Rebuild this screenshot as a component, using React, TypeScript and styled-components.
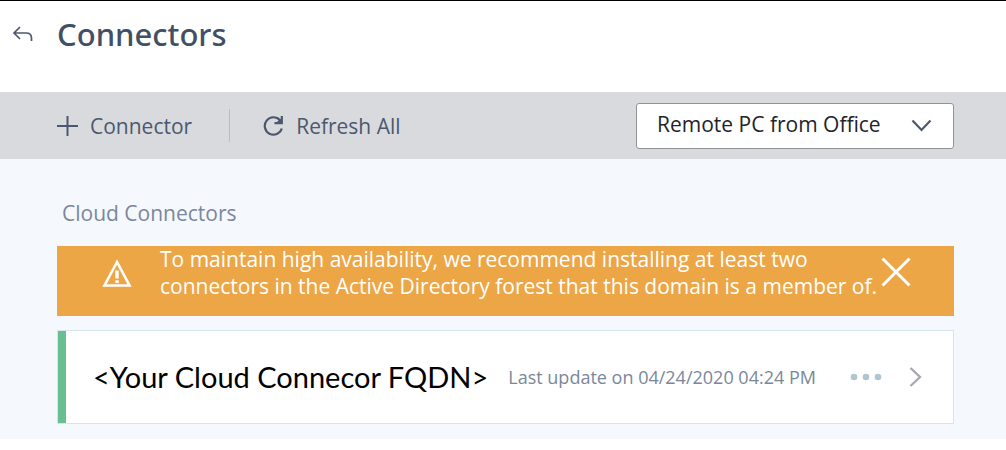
import React from 'react';
import styled, { createGlobalStyle } from 'styled-components';

const GlobalStyle = createGlobalStyle`
  *, *::before, *::after { box-sizing: border-box; }
  body {
    margin: 0;
    background: #fff;
    color: #4b586e;
    font-family: 'Open Sans', 'Noto Sans', sans-serif;
  }
  button, select { font: inherit; color: inherit; }
`;

const Page = styled.div`
  border-top: 1px solid #000;
`;

const IconButton = styled.button`
  display: flex;
  flex: none;
  align-items: center;
  justify-content: center;
  padding: 0;
  border: 0;
  background: none;
  cursor: pointer;
`;

const Header = styled.header`
  display: flex;
  align-items: center;
  gap: 24px;
  height: 91px;
  padding: 0 12px 26px;
`;

const Title = styled.h1`
  margin: 0;
  font-family: 'Noto Sans', sans-serif;
  font-size: 31px;
  line-height: 40px;
  font-weight: 500;
  color: #434f65;
`;

const Toolbar = styled.div`
  display: flex;
  align-items: center;
  height: 67px;
  padding: 0 52px 0 57px;
  background: #d9dade;
`;

const ToolButton = styled(IconButton)`
  gap: 12px;
  font-size: 21px;
  line-height: 28px;
`;

const Divider = styled.span`
  width: 1px;
  height: 33px;
  margin: 0 33px 0 37px;
  background: #bcbdc1;
`;

const SelectWrap = styled.div`
  display: grid;
  align-items: center;
  width: 318px;
  margin-left: auto;
  > * { grid-area: 1 / 1; }
  > svg { justify-self: end; margin-right: 22px; pointer-events: none; }
`;

const Select = styled.select`
  appearance: none;
  width: 100%;
  height: 46px;
  padding: 0 60px 4px 20px;
  border: 1px solid #929397;
  border-radius: 3px;
  background: #fff;
  color: #222429;
  font-size: 21px;
`;

const Content = styled.main`
  padding: 40px 52px 15px 57px;
  background: #f5f8fc;
`;

const SectionTitle = styled.h2`
  margin: 0 0 19px 5px;
  font-size: 21px;
  line-height: 28px;
  font-weight: 400;
  color: #7b879b;
`;

const Banner = styled.div`
  display: flex;
  align-items: flex-start;
  min-height: 70px;
  padding: 0 43px 0 45px;
  background: #eda646;
  color: #fff;
  > svg { flex: none; margin: 13px 28px 0 0; }
`;

const BannerText = styled.p`
  flex: 1;
  margin: 0;
  font-size: 21px;
  line-height: 27px;
`;

const CloseButton = styled(IconButton)`
  margin-top: 11px;
`;

const Card = styled.article`
  display: flex;
  align-items: center;
  height: 94px;
  margin-top: 14px;
  padding-right: 31px;
  border: 1px solid #d6e4eb;
  background: #fff;
`;

const Status = styled.span`
  align-self: stretch;
  width: 8px;
  margin-right: 27px;
  background: #69bf92;
`;

const Name = styled.h3`
  margin: 0;
  font-family: Lato, 'Noto Sans', sans-serif;
  font-size: 29px;
  line-height: 36px;
  font-weight: 400;
  color: #000;
  white-space: nowrap;
`;

const Updated = styled.span`
  margin-left: 20px;
  font-size: 18px;
  line-height: 24px;
  color: #7b879b;
  white-space: nowrap;
`;

const CardActions = styled.div`
  display: flex;
  align-items: center;
  gap: 27px;
  margin-left: auto;
`;

export default function App() {
  return (
    <Page>
      <GlobalStyle />
      <Header>
        <IconButton aria-label="Back">
          <svg width="21" height="18" viewBox="0 0 21 18" fill="none" stroke="#4b586e" strokeWidth="1.7">
            <path d="M8 2 2 8l6 6M2 8h12q5.500 0 5.500 5v3" />
          </svg>
        </IconButton>
        <Title>Connectors</Title>
      </Header>
      <Toolbar>
        <ToolButton>
          <svg width="21" height="20" viewBox="0 0 21 20" stroke="#4b586e" strokeWidth="2">
            <path d="M10.500 0v20M0 10h21" />
          </svg>
          Connector
        </ToolButton>
        <Divider />
        <ToolButton>
          <svg width="21" height="22" viewBox="0 0 21 22" fill="none" stroke="#4b586e" strokeWidth="2.200">
            <path d="M18.800 13.500A8.700 8.700 0 1 1 17 5.200L19 7.500" />
            <path d="M18.800 1v7.200h-7.300M18.800 4v4.200h-4.500z" />
          </svg>
          Refresh All
        </ToolButton>
        <SelectWrap>
          <Select aria-label="Resource location" defaultValue="office">
            <option value="office">Remote PC from Office</option>
          </Select>
          <svg width="21" height="13" viewBox="0 0 21 13" fill="none" stroke="#4b586e" strokeWidth="2.200">
            <path d="m1.500 1.500 9 9.500 9-9.500" />
          </svg>
        </SelectWrap>
      </Toolbar>
      <Content>
        <SectionTitle>Cloud Connectors</SectionTitle>
        <Banner role="alert">
          <svg width="30" height="29" viewBox="0 0 30 29" fill="none" stroke="#fff">
            <path d="M15 3 2.500 26.500h25z" strokeWidth="2.600" />
            <path d="M15 11.500v8M15 21.300v2.600" strokeWidth="3.400" />
          </svg>
          <BannerText>
            To maintain high availability, we recommend installing at least two connectors in the Active
            Directory forest that this domain is a member of.
          </BannerText>
          <CloseButton aria-label="Dismiss">
            <svg width="30" height="30" viewBox="0 0 30 30" stroke="#fff" strokeWidth="3">
              <path d="m1.500 1.500 27 27m0-27-27 27" />
            </svg>
          </CloseButton>
        </Banner>
        <Card>
          <Status />
          <Name>&lt;Your Cloud Connecor FQDN&gt;</Name>
          <Updated>Last update on 04/24/2020 04:24 PM</Updated>
          <CardActions>
            <IconButton aria-label="More options">
              <svg width="32" height="8" viewBox="0 0 32 8" fill="#afc5d1">
                <circle cx="4" cy="4" r="3.300" />
                <circle cx="16" cy="4" r="3.300" />
                <circle cx="28" cy="4" r="3.300" />
              </svg>
            </IconButton>
            <IconButton aria-label="Open connector">
              <svg width="13" height="20" viewBox="0 0 13 20" fill="none" stroke="#a6a7b5" strokeWidth="2.300">
                <path d="m1.500 1 9.500 9-9.500 9" />
              </svg>
            </IconButton>
          </CardActions>
        </Card>
      </Content>
    </Page>
  );
}
